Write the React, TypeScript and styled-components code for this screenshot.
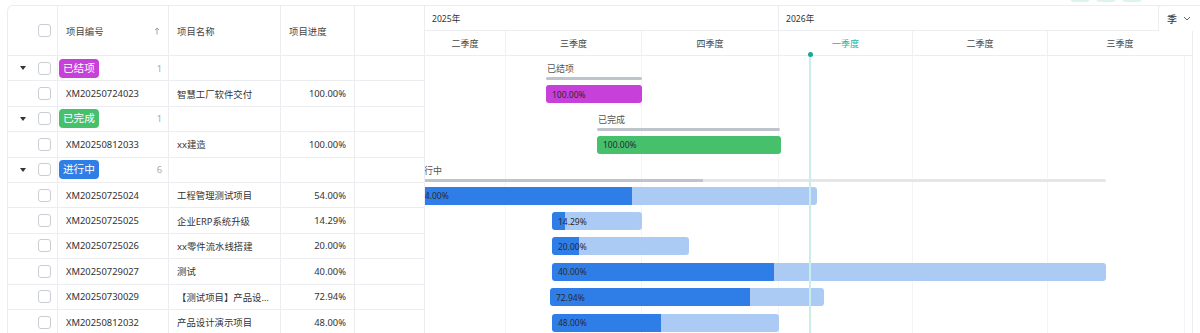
import React from 'react'
import styled, { createGlobalStyle } from 'styled-components'

const GlobalStyle = createGlobalStyle`
  html, body {
    margin: 0;
    padding: 0;
    background: #fff;
  }
  body {
    font-family: "Noto Sans", "Noto Sans CJK SC", sans-serif;
    color: #333;
  }
  * {
    box-sizing: border-box;
  }
`

interface Task {
  code: string
  name: string
  progress: string
  left: number
  width: number
  done: number
}

interface Group {
  name: string
  color: string
  count: number
  line: { left: number; width: number; done: number }
  tasks: Task[]
}

const BLUE = '#2f7ee8'
const BLUE_LIGHT = '#abcbf5'

const groups: Group[] = [
  {
    name: '已结项',
    color: '#c640d9',
    count: 1,
    line: { left: 121, width: 96, done: 100 },
    tasks: [
      { code: 'XM20250724023', name: '智慧工厂软件交付', progress: '100.00%', left: 121, width: 96, done: 100 }
    ]
  },
  {
    name: '已完成',
    color: '#47c06c',
    count: 1,
    line: { left: 172, width: 183, done: 100 },
    tasks: [
      { code: 'XM20250812033', name: 'xx建造', progress: '100.00%', left: 172, width: 184, done: 100 }
    ]
  },
  {
    name: '进行中',
    color: BLUE,
    count: 6,
    line: { left: -11, width: 692, done: 41.8 },
    tasks: [
      { code: 'XM20250725024', name: '工程管理测试项目', progress: '54.00%', left: -11, width: 403, done: 54 },
      { code: 'XM20250725025', name: '企业ERP系统升级', progress: '14.29%', left: 127, width: 90, done: 14.29 },
      { code: 'XM20250725026', name: 'xx零件流水线搭建', progress: '20.00%', left: 127, width: 137, done: 20 },
      { code: 'XM20250729027', name: '测试', progress: '40.00%', left: 127, width: 554, done: 40 },
      { code: 'XM20250730029', name: '【测试项目】产品设计与开发', progress: '72.94%', left: 125, width: 274, done: 72.94 },
      { code: 'XM20250812032', name: '产品设计演示项目', progress: '48.00%', left: 127, width: 227, done: 48 }
    ]
  }
]

const quarters = [
  { label: '二季度', width: 81 },
  { label: '三季度', width: 136 },
  { label: '四季度', width: 137 },
  { label: '一季度', width: 134, current: true },
  { label: '二季度', width: 135 },
  { label: '三季度', width: 145 }
]

const years = [
  { label: '2025年', width: 354 },
  { label: '2026年', width: 414 }
]

const LINE = '#ebedf0'
const COLS = '50px 111px 112px 74px 70px'
const ROW_H = '25.4px'

const Page = styled.div`
  width: 1200px;
  height: 333px;
  overflow: hidden;
  padding-left: 7px;
`

const Toolbar = styled.div`
  height: 2px;
  margin-bottom: 3px;
  display: flex;
  justify-content: flex-end;
  align-items: flex-end;
  gap: 6px;
  padding-right: 58px;
  overflow: hidden;
`

const ToolButton = styled.div`
  width: 20px;
  height: 22px;
  border-radius: 4px;
  background: #dcf3ef;
`

const Board = styled.div`
  position: relative;
  display: flex;
  width: 1186px;
`

const TableSide = styled.div`
  width: 418px;
  flex: none;
  border-left: 1px solid ${LINE};
  border-top: 1px solid ${LINE};
  border-top-left-radius: 6px;
`

const HeaderRow = styled.div`
  display: grid;
  grid-template-columns: ${COLS};
  height: 50px;
`

const BodyRow = styled.div`
  display: grid;
  grid-template-columns: ${COLS};
  height: ${ROW_H};
`

const Cell = styled.div<{ $right?: boolean; $tight?: boolean }>`
  display: flex;
  align-items: center;
  justify-content: ${(p) => (p.$right ? 'flex-end' : 'flex-start')};
  padding: ${(p) => (p.$tight ? '0 6px 0 1px' : '0 8px')};
  border-right: 1px solid ${LINE};
  border-bottom: 1px solid ${LINE};
  font-size: 9.4px;
  color: #333;
  min-width: 0;
  white-space: nowrap;
`

const CellText = styled.span`
  overflow: hidden;
  text-overflow: ellipsis;
`

const HeaderTitle = styled.span`
  flex: 1;
  color: #444;
`

const SelectCell = styled.div`
  display: flex;
  align-items: center;
  padding-left: 12px;
  border-right: 1px solid ${LINE};
  border-bottom: 1px solid ${LINE};
`

const CaretSlot = styled.span`
  width: 18px;
  display: flex;
  align-items: center;
`

const Checkbox = styled.span`
  width: 13px;
  height: 13px;
  border: 1px solid #c9cdd4;
  border-radius: 3px;
  background: #fff;
`

const StatusTag = styled.span<{ $color: string }>`
  height: 19px;
  line-height: 19px;
  padding: 0 4px;
  border-radius: 4px;
  background: ${(p) => p.$color};
  color: #fff;
  font-size: 10.6px;
`

const Count = styled.span`
  margin-left: auto;
  color: #aaa;
  font-size: 9.4px;
`

const GanttSide = styled.div`
  position: relative;
  width: 768px;
  flex: none;
  border-top: 1px solid ${LINE};
  border-right: 1px solid ${LINE};
  overflow: hidden;
`

const ScaleRow = styled.div`
  display: flex;
  height: 25px;
  border-bottom: 1px solid ${LINE};
`

const YearCell = styled.div<{ $w: number }>`
  width: ${(p) => p.$w}px;
  flex: none;
  display: flex;
  align-items: center;
  padding-left: 7px;
  border-right: 1px solid ${LINE};
  font-size: 8.6px;
  color: #333;
`

const QuarterCell = styled.div<{ $w: number; $current?: boolean }>`
  width: ${(p) => p.$w}px;
  flex: none;
  display: flex;
  align-items: center;
  justify-content: center;
  border-right: 1px solid #eff0f3;
  font-size: 9px;
  color: ${(p) => (p.$current ? '#1fb3a2' : '#444')};
`

const GanttBody = styled.div`
  position: relative;
`

const GridLayer = styled.div`
  position: absolute;
  inset: 0;
  display: flex;
  pointer-events: none;
`

const GridCol = styled.div<{ $w: number }>`
  width: ${(p) => p.$w}px;
  flex: none;
  border-right: 1px solid #f3f4f6;
`

const TaskRow = styled.div`
  position: relative;
  height: ${ROW_H};
  display: flex;
  align-items: center;
`

const GroupRow = styled.div`
  position: relative;
  height: ${ROW_H};
  display: flex;
  flex-direction: column;
  align-items: flex-start;
  padding-top: 7px;
`

const GroupLabel = styled.span`
  font-size: 9px;
  line-height: 12px;
  color: #555;
  white-space: nowrap;
`

const SummaryLine = styled.div<{ $done: number }>`
  margin-top: 2px;
  height: 3px;
  border-radius: 2px;
  background: linear-gradient(
    to right,
    #bfc4cc ${(p) => p.$done}%,
    #e4e6ea ${(p) => p.$done}%
  );
`

const Bar = styled.div<{ $dark: string; $light: string; $done: number }>`
  height: 18px;
  flex: none;
  border-radius: 3px;
  display: flex;
  align-items: center;
  padding-left: 6px;
  background: linear-gradient(
    to right,
    ${(p) => p.$dark} ${(p) => p.$done}%,
    ${(p) => p.$light} ${(p) => p.$done}%
  );
  font-size: 8.5px;
  color: #2a2a2a;
  white-space: nowrap;
  overflow: hidden;
`

const TodayLine = styled.div`
  position: absolute;
  left: 384px;
  top: 46px;
  bottom: 0;
  width: 2px;
  background: #c9eeea;
  z-index: 2;

  &::before {
    content: '';
    position: absolute;
    left: -1.5px;
    top: 0;
    width: 5px;
    height: 5px;
    border-radius: 50%;
    background: #17a999;
  }
`

const ScaleSelect = styled.div`
  position: absolute;
  top: 0;
  right: -7px;
  width: 42px;
  height: 26px;
  display: flex;
  align-items: center;
  gap: 6px;
  padding-left: 8px;
  background: #fff;
  border-left: 1px solid ${LINE};
  border-top: 1px solid ${LINE};
  border-top-left-radius: 4px;
  font-size: 10px;
  color: #333;
  z-index: 3;
`

const Caret = () => (
  <svg width="6" height="4" viewBox="0 0 6 4">
    <path d="M0 0h6L3 4z" fill="#333" />
  </svg>
)

const SortArrow = () => (
  <svg width="6" height="8" viewBox="0 0 6 8">
    <path d="M3 7.5V1M1 3l2-2 2 2" fill="none" stroke="#999" strokeWidth="0.9" />
  </svg>
)

const Chevron = () => (
  <svg width="8" height="5" viewBox="0 0 8 5">
    <path d="M1 1l3 3 3-3" fill="none" stroke="#666" strokeWidth="1" />
  </svg>
)

const App: React.FC = () => {
  return (
    <Page>
      <GlobalStyle />
      <Toolbar>
        <ToolButton />
        <ToolButton />
        <ToolButton />
      </Toolbar>
      <Board>
        <TableSide>
          <HeaderRow>
            <SelectCell>
              <CaretSlot />
              <Checkbox />
            </SelectCell>
            <Cell>
              <HeaderTitle>项目编号</HeaderTitle>
              <SortArrow />
            </Cell>
            <Cell>
              <HeaderTitle>项目名称</HeaderTitle>
            </Cell>
            <Cell>
              <HeaderTitle>项目进度</HeaderTitle>
            </Cell>
            <Cell />
          </HeaderRow>
          {groups.map((g) => (
            <React.Fragment key={g.name}>
              <BodyRow>
                <SelectCell>
                  <CaretSlot>
                    <Caret />
                  </CaretSlot>
                  <Checkbox />
                </SelectCell>
                <Cell $tight>
                  <StatusTag $color={g.color}>{g.name}</StatusTag>
                  <Count>{g.count}</Count>
                </Cell>
                <Cell />
                <Cell />
                <Cell />
              </BodyRow>
              {g.tasks.map((t) => (
                <BodyRow key={t.code}>
                  <SelectCell>
                    <CaretSlot />
                    <Checkbox />
                  </SelectCell>
                  <Cell>
                    <CellText>{t.code}</CellText>
                  </Cell>
                  <Cell>
                    <CellText>{t.name}</CellText>
                  </Cell>
                  <Cell $right>{t.progress}</Cell>
                  <Cell />
                </BodyRow>
              ))}
            </React.Fragment>
          ))}
        </TableSide>

        <GanttSide>
          <ScaleRow>
            {years.map((y) => (
              <YearCell key={y.label} $w={y.width}>
                {y.label}
              </YearCell>
            ))}
          </ScaleRow>
          <ScaleRow>
            {quarters.map((q, i) => (
              <QuarterCell key={i} $w={q.width} $current={q.current}>
                {q.label}
              </QuarterCell>
            ))}
          </ScaleRow>
          <GanttBody>
            <GridLayer>
              {quarters.map((q, i) => (
                <GridCol key={i} $w={i === quarters.length - 1 ? 137 : q.width} />
              ))}
            </GridLayer>
            {groups.map((g) => {
              const light = g.color === BLUE ? BLUE_LIGHT : g.color
              return (
                <React.Fragment key={g.name}>
                  <GroupRow>
                    <GroupLabel style={{ marginLeft: g.line.left + 1 }}>{g.name}</GroupLabel>
                    <SummaryLine
                      $done={g.line.done}
                      style={{ marginLeft: g.line.left, width: g.line.width }}
                    />
                  </GroupRow>
                  {g.tasks.map((t) => (
                    <TaskRow key={t.code}>
                      <Bar
                        $dark={g.color}
                        $light={light}
                        $done={t.done}
                        style={{ marginLeft: t.left, width: t.width }}
                      >
                        {t.progress}
                      </Bar>
                    </TaskRow>
                  ))}
                </React.Fragment>
              )
            })}
          </GanttBody>
          <TodayLine />
        </GanttSide>

        <ScaleSelect>
          季
          <Chevron />
        </ScaleSelect>
      </Board>
    </Page>
  )
}

export default App
